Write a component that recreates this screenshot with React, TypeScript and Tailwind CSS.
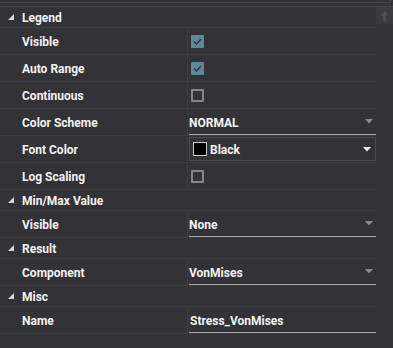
import type { ReactNode } from "react";

type Prop =
  | { kind: "category"; label: string }
  | { kind: "check"; label: string; checked: boolean }
  | { kind: "select"; label: string; value: string }
  | { kind: "color"; label: string; value: string }
  | { kind: "text"; label: string; value: string };

const ROWS: Prop[] = [
  { kind: "category", label: "Legend" },
  { kind: "check", label: "Visible", checked: true },
  { kind: "check", label: "Auto Range", checked: true },
  { kind: "check", label: "Continuous", checked: false },
  { kind: "select", label: "Color Scheme", value: "NORMAL" },
  { kind: "color", label: "Font Color", value: "Black" },
  { kind: "check", label: "Log Scaling", checked: false },
  { kind: "category", label: "Min/Max Value" },
  { kind: "select", label: "Visible", value: "None" },
  { kind: "category", label: "Result" },
  { kind: "select", label: "Component", value: "VonMises" },
  { kind: "category", label: "Misc" },
  { kind: "text", label: "Name", value: "Stress_VonMises" },
];

function Caret({ light }: { light?: boolean }) {
  return (
    <svg width="8" height="5" viewBox="0 0 8 5" className="shrink-0">
      <path d="M0 0h8L4 4.5z" fill={light ? "#f4f4f4" : "#8c8c90"} />
    </svg>
  );
}

function Expander() {
  return (
    <svg width="6" height="6" viewBox="0 0 6 6" className="shrink-0">
      <path d="M6 0v6H0z" fill="#d8d8dc" />
    </svg>
  );
}

function CheckBox({ checked }: { checked: boolean }) {
  if (checked) {
    return (
      <div className="flex h-[13px] w-[13px] items-center justify-center rounded-[1px] bg-[#5f8797]">
        <svg width="9" height="7" viewBox="0 0 9 7">
          <path d="M1 3.5l2.5 2.5L8 1" stroke="#2f3438" strokeWidth="1.4" fill="none" />
        </svg>
      </div>
    );
  }
  return <div className="h-[13px] w-[13px] rounded-[1px] border-2 border-[#85858a]" />;
}

function Underlined({ children }: { children: ReactNode }) {
  return (
    <div className="ml-[1px] flex h-full flex-1 items-center border-b border-[#a8a8ac] pr-[3px]">
      {children}
    </div>
  );
}

function Value({ row }: { row: Prop }) {
  switch (row.kind) {
    case "check":
      return (
        <div className="flex h-full items-center pl-[3px]">
          <CheckBox checked={row.checked} />
        </div>
      );
    case "select":
      return (
        <Underlined>
          <span className="flex-1 pt-[2px]">{row.value}</span>
          <Caret />
        </Underlined>
      );
    case "color":
      return (
        <div className="ml-[1px] flex h-full flex-1 items-center py-[1px]">
          <div className="flex h-full flex-1 items-center gap-[3px] border border-[#4a494f] pl-[3px] pr-[4px]">
            <div className="h-[14px] w-[14px] border border-[#c8c8c8] bg-black" />
            <span className="flex-1 pt-[2px]">{row.value}</span>
            <Caret light />
          </div>
        </div>
      );
    case "text":
      return (
        <Underlined>
          <span className="pl-[1px] pt-[2px]">{row.value}</span>
        </Underlined>
      );
    default:
      return null;
  }
}

function Row({ row }: { row: Prop }) {
  if (row.kind === "category") {
    return (
      <div className="flex h-[21px] items-center border-b border-[#3e3d43]">
        <div className="flex w-[22px] justify-start pl-[8px]">
          <Expander />
        </div>
        <span className="pt-[1px]">{row.label}</span>
      </div>
    );
  }
  return (
    <div className="flex h-[27px] border-b border-[#3e3d43]">
      <div className="flex w-[188px] shrink-0 items-center border-r border-[#3e3d43] pl-[22px] pt-[2px]">
        {row.label}
      </div>
      <div className="flex min-w-0 flex-1 items-center">
        <Value row={row} />
      </div>
    </div>
  );
}

export default function App() {
  return (
    <div className="h-[348px] w-[393px] overflow-hidden bg-[#333237] font-['Roboto',sans-serif] text-[12px] font-bold text-[#f2f2f2]">
      <div className="h-[7px] border-b border-[#48474d]">
        <div className="h-[3px] w-[391px] border-b border-r border-[#48474d]" />
      </div>
      <div className="flex">
        <div className="w-[376px] shrink-0">
          {ROWS.map((row, i) => (
            <Row key={i} row={row} />
          ))}
        </div>
        <div className="flex-1">
          <div className="flex h-[17px] items-center justify-center bg-[#3b3a40]">
            <svg width="9" height="10" viewBox="0 0 9 10">
              <path d="M4.5 0L9 4.5H6V10H3V4.5H0z" fill="#4f4e55" />
            </svg>
          </div>
        </div>
      </div>
    </div>
  );
}
